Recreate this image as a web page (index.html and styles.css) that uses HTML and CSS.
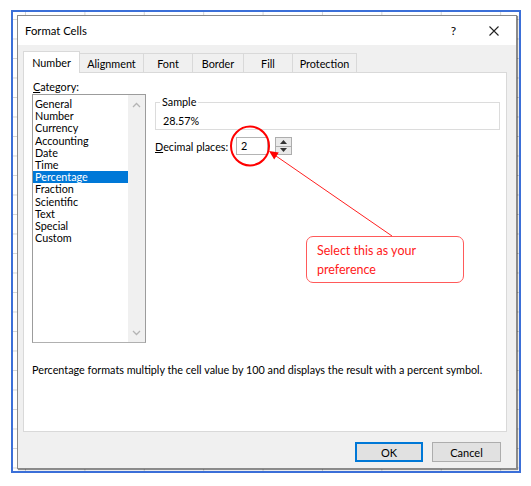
FILE: index.html
```html
<!DOCTYPE html>
<html lang="en">
<head>
    <meta charset="UTF-8">
    <title>Format Cells</title>
    <link rel="stylesheet" href="styles.css">
</head>
<body>
    <div class="sheet">
        <div class="dialog">
            <div class="titlebar">
                <span class="title">Format Cells</span>
                <span class="help">?</span>
                <svg class="close" width="10" height="10" viewBox="0 0 10 10">
                    <path d="M0.5 0.5 L9.5 9.5 M9.5 0.5 L0.5 9.5" stroke="#222" stroke-width="1.1" fill="none"/>
                </svg>
            </div>
            <div class="content">
                <div class="tabs">
                    <div class="tab tab-active w-number">Number</div>
                    <div class="tab w-alignment">Alignment</div>
                    <div class="tab w-font">Font</div>
                    <div class="tab w-border">Border</div>
                    <div class="tab w-fill">Fill</div>
                    <div class="tab w-protection">Protection</div>
                </div>
                <div class="panel">
                    <div class="panel-main">
                        <div class="category">
                            <div class="field-label"><u>C</u>ategory:</div>
                            <div class="listbox">
                                <ul class="items">
                                    <li>General</li>
                                    <li>Number</li>
                                    <li>Currency</li>
                                    <li>Accounting</li>
                                    <li>Date</li>
                                    <li>Time</li>
                                    <li class="selected">Percentage</li>
                                    <li>Fraction</li>
                                    <li>Scientific</li>
                                    <li>Text</li>
                                    <li>Special</li>
                                    <li>Custom</li>
                                </ul>
                                <div class="scrollbar">
                                    <svg width="9" height="6" viewBox="0 0 9 6"><path d="M1 5 L4.5 1.5 L8 5" stroke="#b4b4b4" stroke-width="1.3" fill="none"/></svg>
                                    <svg width="9" height="6" viewBox="0 0 9 6"><path d="M1 1 L4.5 4.5 L8 1" stroke="#b4b4b4" stroke-width="1.3" fill="none"/></svg>
                                </div>
                            </div>
                        </div>
                        <div class="options">
                            <fieldset class="sample">
                                <legend>Sample</legend>
                                <div class="sample-value">28.57%</div>
                            </fieldset>
                            <div class="decimal-row">
                                <label class="decimal-label"><u>D</u>ecimal places:</label>
                                <div class="number-input">2</div>
                                <div class="spinner">
                                    <span class="spin-btn"><svg width="7" height="4" viewBox="0 0 7 4"><path d="M0 4 L3.5 0 L7 4 Z" fill="#333"/></svg></span>
                                    <span class="spin-btn"><svg width="7" height="4" viewBox="0 0 7 4"><path d="M0 0 L3.5 4 L7 0 Z" fill="#333"/></svg></span>
                                </div>
                            </div>
                        </div>
                    </div>
                    <p class="description">Percentage formats multiply the cell value by 100 and displays the result with a percent symbol.</p>
                </div>
                <div class="footer">
                    <button class="btn btn-default">OK</button>
                    <button class="btn btn-cancel">Cancel</button>
                </div>
            </div>
        </div>
    </div>

    <!-- red annotation drawn over the dialog -->
    <svg class="annotation" width="531" height="486" viewBox="0 0 531 486">
        <ellipse cx="250" cy="146" rx="19" ry="19.5" stroke="#ff0000" stroke-width="2" fill="none"/>
        <line x1="392" y1="236" x2="276" y2="156" stroke="#ff2020" stroke-width="1"/>
        <path d="M269 151 L278.8 152.6 L274.2 159.4 Z" fill="#ff0000"/>
    </svg>
    <div class="callout">Select this as your<br>preference</div>
</body>
</html>
```

FILE: styles.css
```css
body {
    margin: 0;
    width: 531px;
    height: 486px;
    position: relative;
    background: #fff;
    font-family: 'Lato', 'Noto Sans', sans-serif;
    font-size: 10.8px;
    color: #000;
    overflow: hidden;
}
.sheet {
    margin: 10px 0 0 11px;
    width: 510px;
    height: 463px;
    box-sizing: border-box;
    border: 2px solid #3b6fd8;
    padding: 3px 0 0 4px;
    background-color: #fff;
    background-image:
        linear-gradient(90deg, #d6d6d6 1px, transparent 1px),
        linear-gradient(180deg, #d6d6d6 1px, transparent 1px);
    background-size: 59.4px 100%, 100% 19.5px;
    background-position: 12px 0, 0 7px;
}
.dialog {
    width: 500px;
    height: 454px;
    box-sizing: border-box;
    border: 1px solid #8a8a8a;
    background: #f0f0f0;
    box-shadow: 1px 1px 1px rgba(0,0,0,0.45);
}
.titlebar {
    height: 29px;
    background: #fff;
    display: flex;
    align-items: center;
    padding-left: 7px;
}
.title {
    flex: 1;
    font-size: 11.3px;
}
.help {
    font-size: 12px;
    margin-right: 33px;
}
.close {
    margin-right: 17px;
}
.content {
    padding: 6px 9px 0 5px;
}
.tabs {
    display: flex;
    align-items: flex-end;
    height: 21px;
}
.tab {
    height: 19px;
    box-sizing: border-box;
    border: 1px solid #d9d9d9;
    border-bottom: none;
    background: #f0f0f0;
    text-align: center;
    line-height: 19px;
    margin-left: -1px;
}
.tab-active {
    height: 22px;
    margin-bottom: -1px;
    margin-left: 0;
    background: #fff;
    position: relative;
    z-index: 1;
    line-height: 21px;
}
.w-number { width: 57px; }
.w-alignment { width: 65px; }
.w-font { width: 50px; }
.w-border { width: 52px; }
.w-fill { width: 50px; }
.w-protection { width: 65px; }
.panel {
    height: 360px;
    box-sizing: border-box;
    border: 1px solid #d9d9d9;
    background: #fff;
    padding: 7px 6px 0 8px;
}
.panel-main {
    display: flex;
    gap: 9px;
}
.category {
    width: 114px;
}
.field-label {
    height: 14px;
    line-height: 14px;
    padding-left: 1px;
}
.listbox {
    height: 249px;
    box-sizing: border-box;
    border: 1px solid #9c9c9c;
    border-bottom-color: #b0b0b0;
    display: flex;
}
.items {
    flex: 1;
    list-style: none;
    margin: 0;
    padding: 3px 0 0 0;
}
.items li {
    line-height: 12.2px;
    height: 12.2px;
    padding-left: 2px;
}
.items li.selected {
    background: #0078d7;
    color: #fff;
}
.scrollbar {
    width: 17px;
    background: #f0f0f0;
    display: flex;
    flex-direction: column;
    justify-content: space-between;
    align-items: center;
    padding: 7px 0 6px;
    box-sizing: border-box;
}
.options {
    width: 345px;
    padding-top: 14px;
}
.sample {
    margin: 1px 0 0 0;
    padding: 5px 6px 1px 4px;
    border: 1px solid #dcdcdc;
    min-width: 0;
}
.sample legend {
    padding: 0 2px;
    line-height: 14px;
}
.sample-value {
    line-height: 14px;
    padding-left: 3px;
}
.decimal-row {
    display: flex;
    align-items: center;
    margin-top: 7px;
    height: 18px;
}
.decimal-label {
    width: 81px;
}
.number-input {
    width: 32px;
    height: 18px;
    box-sizing: border-box;
    border: 1px solid #b4b4b4;
    padding-left: 4px;
    line-height: 16px;
}
.spinner {
    margin-left: 7px;
    width: 17px;
    height: 18px;
    box-sizing: border-box;
    border: 1px solid #adadad;
    display: flex;
    flex-direction: column;
    background: #e9e9e9;
}
.spin-btn {
    flex: 1;
    display: flex;
    align-items: center;
    justify-content: center;
}
.spin-btn + .spin-btn {
    border-top: 1px solid #adadad;
}
.description {
    margin: 20px 0 0 0;
    line-height: 14px;
}
.footer {
    display: flex;
    justify-content: flex-end;
    gap: 9px;
    padding: 10px 6px 0 0;
}
.btn {
    height: 20px;
    box-sizing: border-box;
    background: #e1e1e1;
    border: 1px solid #adadad;
    font-family: inherit;
    font-size: 11px;
    padding: 0;
    color: #000;
}
.btn-default {
    width: 68px;
    border: 2px solid #0078d7;
}
.btn-cancel {
    width: 69px;
}
.annotation {
    position: absolute;
    top: 0;
    left: 0;
    pointer-events: none;
}
.callout {
    position: absolute;
    left: 306px;
    top: 236px;
    width: 158px;
    height: 47px;
    box-sizing: border-box;
    border: 1.5px solid #ff5a5a;
    border-radius: 7px;
    background: #fff;
    color: #ff1a1a;
    font-size: 12.5px;
    line-height: 19px;
    padding: 4px 0 0 10px;
}
```
